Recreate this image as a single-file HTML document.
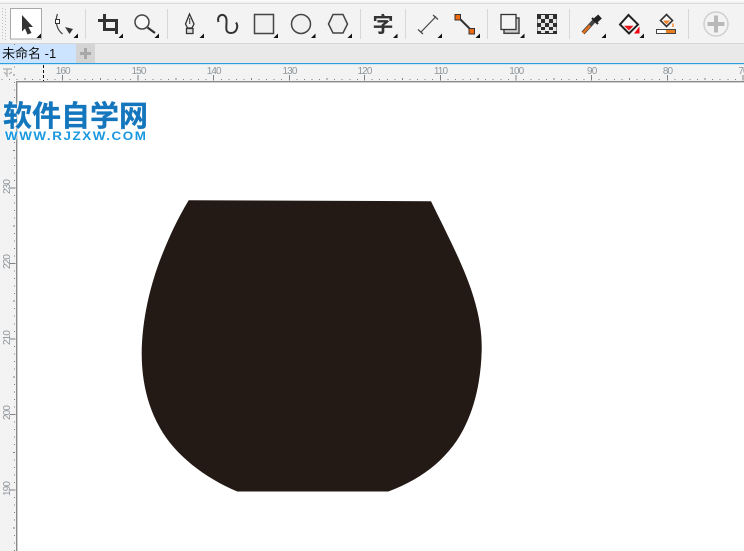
<!DOCTYPE html>
<html lang="zh"><head><meta charset="utf-8"><title>未命名 -1</title>
<style>
html,body{margin:0;padding:0;background:#fff}
#p{position:relative;width:744px;height:551px;overflow:hidden;background:#fff;font-family:"Liberation Sans","Noto Sans CJK SC",sans-serif}
#p>*{position:absolute}
.lg{left:3px;top:96px;font:700 29px/36px "Noto Sans CJK SC",sans-serif;color:#1476bd;-webkit-text-stroke:.3px #1476bd;white-space:nowrap;text-shadow:0 0 2px #fff,0 0 2px #fff,0 0 3px #fff}
.ur{left:5px;top:129.5px;font:700 11.5px/14px "Liberation Sans",sans-serif;color:#1a98e0;white-space:nowrap;letter-spacing:1.35px;transform:scaleX(1.165);transform-origin:0 0;text-shadow:0 0 2px #fff,0 0 2px #fff}
</style></head><body><div id="p">
<svg style="left:0;top:0" width="744" height="551" viewBox="0 0 744 551">
<defs>
<path id="hx" d="M0 75v5.5M7.56 79v1M15.12 79v1M22.68 79v1M30.24 79v1M37.8 78v2M45.36 79v1M52.92 79v1M60.48 79v1M68.04 79v1" stroke="#808080" stroke-width="1" fill="none" shape-rendering="crispEdges"/>
<path id="vx" d="M10 0h5.5M14 7.56h1M14 15.12h1M14 22.68h1M14 30.24h1M13 37.8h2M14 45.36h1M14 52.92h1M14 60.48h1M14 68.04h1" stroke="#808080" stroke-width="1" fill="none" shape-rendering="crispEdges"/>
<path id="tr" d="M-4.5 0H0V-4.5Z" fill="#111"/>
</defs>
<!-- backgrounds -->
<rect width="744" height="43" fill="#f3f3f3"/>
<rect width="744" height="1" y="0" fill="#fafafa"/>
<rect y="3" width="744" height="1" fill="#d9d9d9"/>
<rect y="43" width="744" height="1" fill="#d6d6d6"/>
<rect y="44" width="744" height="19" fill="#e9e9e9"/>
<rect y="44" width="76" height="19" fill="#cce4ff"/>
<rect x="76" y="44" width="19" height="19" fill="#d4d4d4"/>
<path d="M85.5 48v11M80 53.5h11" stroke="#a8a8a8" stroke-width="3"/>
<rect y="63" width="744" height="1.3" fill="#2a9fe0"/>
<rect y="64.3" width="744" height="17" fill="#f3f3f3"/>
<rect y="81" width="16" height="470" fill="#f3f3f3"/>
<!-- rulers -->
<g>
<use href="#hx" x="-13"/><use href="#hx" x="62.5"/><use href="#hx" x="138.1"/><use href="#hx" x="213.7"/><use href="#hx" x="289.3"/><use href="#hx" x="364.6"/><use href="#hx" x="440.3"/><use href="#hx" x="516.1"/><use href="#hx" x="591.6"/><use href="#hx" x="667.3"/><use href="#hx" x="742.9"/>
<use href="#vx" y="37"/><use href="#vx" y="112.5"/><use href="#vx" y="188"/><use href="#vx" y="263.3"/><use href="#vx" y="339"/><use href="#vx" y="414.5"/><use href="#vx" y="490"/>
</g>
<rect x="16" y="81" width="728" height="1.4" fill="#8a8a8a"/>
<rect x="16" y="81" width="1.4" height="470" fill="#8a8a8a"/>
<g font-family="Liberation Sans" font-size="10" fill="#8f969c" text-anchor="middle" letter-spacing="-.9">
<text x="62.7" y="74">160</text><text x="138.5" y="74">150</text><text x="213.7" y="74">140</text><text x="289.5" y="74">130</text><text x="364.5" y="74">120</text><text x="440.5" y="74">110</text><text x="516.3" y="74">100</text><text x="591.7" y="74">90</text><text x="667.5" y="74">80</text><text x="743" y="74">70</text>
<text transform="translate(10 187) rotate(-90)">230</text><text transform="translate(10 262) rotate(-90)">220</text><text transform="translate(10 338) rotate(-90)">210</text><text transform="translate(10 413) rotate(-90)">200</text><text transform="translate(10 489) rotate(-90)">190</text>
</g>
<path d="M43.5 65v16" stroke="#111" stroke-width="1" stroke-dasharray="3 2"/>
<path d="M3 69h9M7 69v8M4 72l3 3M12 72l-3 2" stroke="#aaa" stroke-width="1.2" fill="none"/>
<!-- artwork -->
<path d="M188.7 200.3L431 201.2C445 230 465 268 473.5 297C480 318 482 335 481.7 350C481 380 475 405 466 424C452 455 425 478 388.3 491.5L237.3 491.5C205 478 175 455 160 428C147 405 141.7 380 141.7 353C142 320 150 285 162 255C170 235 178 218 188.7 200.3Z" fill="#231a16"/>
<!-- gripper -->
<path d="M2.5 8v32M5.5 9v31" stroke="#bdbdbd" stroke-width="1" stroke-dasharray="1 2"/>
<!-- select -->
<rect x="10.5" y="8.5" width="31" height="30.5" fill="#fff" stroke="#a9a9a9"/>
<path d="M22 15L33 27H28.5L31.5 33L27.5 34.5L25 28.5L22 31.5Z" fill="#333"/>
<!-- shape tool -->
<path d="M57.5 14C55 20 56 29 62.5 34" stroke="#444" fill="none" stroke-width="1.2"/>
<rect x="55.5" y="19.5" width="4" height="4" fill="#fff" stroke="#333"/>
<path d="M65 27L73 29L69.5 34Z" fill="#333"/>
<!-- crop -->
<path d="M98 20.5H118M116.5 19V34M104.5 14V29.5H118" stroke="#333" stroke-width="3" fill="none"/>
<!-- zoom -->
<circle cx="142" cy="22" r="7" fill="#f8f8f8" stroke="#444" stroke-width="1.5"/>
<path d="M147.5 27.5L155 33" stroke="#333" stroke-width="2.2"/>
<!-- pen -->
<path d="M189.5 14L185.5 24L187.5 28H192L194 24Z" fill="#eee" stroke="#333" stroke-width="1.3"/>
<path d="M189.7 18v6" stroke="#333"/>
<rect x="186.5" y="28.5" width="6.5" height="5" fill="#ddd" stroke="#333" stroke-width="1.3"/>
<!-- curve -->
<path d="M218.5 22C216 14 226 12 226.5 20C227 26 224 33 231 33C237 33 238.5 26 236 22.5" stroke="#333" stroke-width="2" fill="none"/>
<!-- rect / ellipse / polygon -->
<rect x="254.5" y="14.5" width="19" height="19" fill="#f0f0f0" stroke="#444" stroke-width="1.5"/>
<circle cx="301" cy="24" r="9.5" fill="#f0f0f0" stroke="#444" stroke-width="1.5"/>
<path d="M328.5 24L333 14.5H343L347.5 24L343 33H333Z" fill="#f0f0f0" stroke="#444" stroke-width="1.5"/>
<!-- text tool -->
<text x="383" y="32" font-family="Noto Sans CJK SC" font-weight="700" font-size="21" fill="#333" text-anchor="middle">字</text>
<!-- dimension -->
<path d="M421 32L436 16.5" stroke="#444" stroke-width="1.2"/>
<path d="M433 15L438 19.5M418 29.5L423 34" stroke="#444" stroke-width="1.2"/>
<!-- connector -->
<path d="M458 17L472 31" stroke="#333" stroke-width="2"/>
<rect x="455" y="14.5" width="5.5" height="5.5" fill="#f26a10" stroke="#333"/>
<rect x="469" y="28.5" width="5.5" height="5.5" fill="#f26a10" stroke="#333"/>
<!-- shadow -->
<rect x="504" y="18" width="15" height="15.3" fill="#cfcfcf" stroke="#444" stroke-width="1.5"/>
<rect x="501" y="14.5" width="15" height="15" fill="#f5f5f5" stroke="#333" stroke-width="1.3"/>
<!-- transparency -->
<rect x="537" y="14" width="20" height="20" fill="#2e2e2e"/>
<path d="M541 15h4v4h-4zM549 15h4v4h-4zM537.5 19h3.500v4h-3.500zM545 19h4v4h-4zM553 19h3.500v4h-3.500zM541 23h4v4h-4zM549 23h4v4h-4zM537.500 27h3.500v4h-3.500zM545 27h4v4h-4zM553 27h3.500v4h-3.500zM541 30h4v3h-4zM549 30h4v3h-4z" fill="#e6e6e6"/>
<!-- eyedropper -->
<path d="M583 33L594 21" stroke="#444" stroke-width="4"/>
<path d="M583 33L590 25.500" stroke="#e2701c" stroke-width="2.400"/>
<path d="M595 21L600 16.500" stroke="#222" stroke-width="5.500"/>
<path d="M592 18L598 24" stroke="#222" stroke-width="2"/>
<!-- fill -->
<path d="M628.500 15L638 24.500L629 33.500L620 24.500Z" fill="#f8f8f8" stroke="#222" stroke-width="2"/>
<path d="M624 25.700H633.500L629 30.500Z" fill="#e8141a"/>
<path d="M634 33.500L639.500 33.500V26.500Z" fill="#f00010"/>
<!-- interactive fill -->
<path d="M666.500 14.500L672.500 20.500L666.500 26.500L660.500 20.500Z" fill="#fafafa" stroke="#333" stroke-width="1.600"/>
<path d="M663 20.500H670L666.500 24.500Z" fill="#f08028"/>
<path d="M672 27v-2.500l1-2 1 2v2.500z" fill="#f5a45c"/>
<rect x="656.500" y="29.500" width="19" height="4" fill="#fff" stroke="#444"/>
<rect x="666" y="30" width="9" height="3" fill="#e8801f"/>
<!-- plus -->
<circle cx="716" cy="24" r="12" fill="#f3f3f3" stroke="#cfcfcf" stroke-width="1.500"/>
<path d="M716 15.500V32.500M707.500 24H724.500" stroke="#b9b9b9" stroke-width="4"/>
<!-- flyout triangles -->
<use href="#tr" x="41" y="38"/><use href="#tr" x="78" y="38"/><use href="#tr" x="123" y="38"/><use href="#tr" x="159" y="38"/><use href="#tr" x="204" y="38"/><use href="#tr" x="278" y="38"/><use href="#tr" x="315.500" y="38"/><use href="#tr" x="352" y="38"/><use href="#tr" x="397.500" y="38"/><use href="#tr" x="442" y="38"/><use href="#tr" x="480" y="38"/><use href="#tr" x="524.500" y="38"/><use href="#tr" x="606" y="38"/><use href="#tr" x="644" y="38"/>
<!-- separators -->
<path d="M85.500 9v30M167.500 9v30M360.500 9v30M405.500 9v30M487.500 9v30M569.500 9v30M688.500 9v30" stroke="#d8d8d8" stroke-width="1"/>
</svg>
<div style="left:2px;top:45px;font-size:13px;line-height:17px;color:#111;white-space:nowrap">未命名 -1</div>
<div class="lg">软件自学网</div>
<div class="ur">WWW.RJZXW.COM</div>
</div></body></html>
